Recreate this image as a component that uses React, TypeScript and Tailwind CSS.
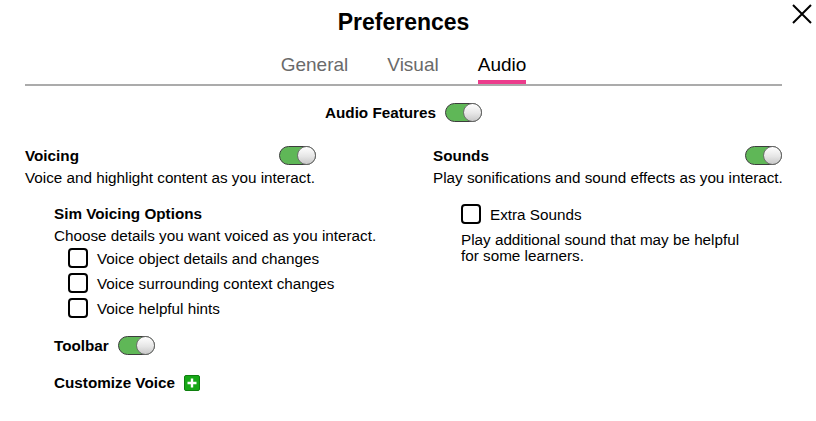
import React from 'react';

function Toggle() {
  return (
    <div className="relative w-[37px] h-[19px] shrink-0 rounded-full bg-[#5fb757] border border-[#3d3d3d]">
      <div className="absolute right-[-1px] top-[-1px] w-[19px] h-[19px] rounded-full border border-[#6e6e6e] bg-[linear-gradient(180deg,#ffffff_0%,#e6e6e6_55%,#c8c8c8_100%)]" />
    </div>
  );
}

function CheckBox() {
  return <div className="w-[20px] h-[20px] shrink-0 rounded-[4px] border-2 border-black bg-white" />;
}

function CheckRow({ label }: { label: string }) {
  return (
    <div className="flex items-center gap-[9px] h-[20px]">
      <CheckBox />
      <span>{label}</span>
    </div>
  );
}

export default function App() {
  return (
    <div
      className="relative w-[816px] h-[421px] bg-white text-black text-[15.25px] leading-[17px] whitespace-nowrap"
      style={{ fontFamily: '"Liberation Sans", Arial, sans-serif' }}
    >
      {/* close button */}
      <button className="absolute left-[792px] top-[4px] w-[20px] h-[20px]" aria-label="Close">
        <svg width="20" height="20" viewBox="0 0 20 20">
          <path d="M1 1 L19 19 M19 1 L1 19" stroke="#000" strokeWidth="2" />
        </svg>
      </button>

      <div className="ml-[25px] w-[757px] flex flex-col">
        <h1 className="pt-[9px] text-center text-[23px] leading-[26px] font-bold">Preferences</h1>

        {/* tabs */}
        <div className="mt-[19px] flex justify-center gap-[39px] text-[19px] leading-[22px]">
          <div className="flex flex-col">
            <span className="text-[#6a6a6a]">General</span>
            <div className="mt-[4px] h-[4px]" />
          </div>
          <div className="flex flex-col">
            <span className="text-[#6a6a6a]">Visual</span>
            <div className="mt-[4px] h-[4px]" />
          </div>
          <div className="flex flex-col">
            <span className="text-black">Audio</span>
            <div className="mt-[4px] h-[4px] bg-[#ec3c8c]" />
          </div>
        </div>
        <div className="h-[2px] bg-[#ababab]" />

        {/* audio features */}
        <div className="mt-[16px] flex justify-center items-center gap-[9px] h-[20px]">
          <span className="font-bold">Audio Features</span>
          <Toggle />
        </div>

        <div className="mt-[23px] flex justify-between">
          {/* voicing */}
          <div className="w-[291px] flex flex-col">
            <div className="flex justify-between items-center h-[20px]">
              <span className="font-bold">Voicing</span>
              <Toggle />
            </div>
            <p className="mt-[4px]">Voice and highlight content as you interact.</p>

            <div className="pl-[29px] flex flex-col">
              <p className="mt-[19px] font-bold">Sim Voicing Options</p>
              <p className="mt-[5px]">Choose details you want voiced as you interact.</p>
              <div className="mt-[4px] pl-[14px] flex flex-col gap-[5px]">
                <CheckRow label="Voice object details and changes" />
                <CheckRow label="Voice surrounding context changes" />
                <CheckRow label="Voice helpful hints" />
              </div>

              <div className="mt-[17px] flex items-center gap-[9px] h-[20px]">
                <span className="font-bold">Toolbar</span>
                <Toggle />
              </div>

              <div className="mt-[19px] flex items-center gap-[9px]">
                <span className="font-bold">Customize Voice</span>
                <div className="w-[16px] h-[16px] rounded-[2px] bg-[#17a817] border border-[#0f7f0f] flex items-center justify-center">
                  <svg width="10" height="10" viewBox="0 0 10 10">
                    <path d="M5 0.5 V9.5 M0.5 5 H9.5" stroke="#fff" strokeWidth="2.4" />
                  </svg>
                </div>
              </div>
            </div>
          </div>

          {/* sounds */}
          <div className="w-[349px] flex flex-col">
            <div className="flex justify-between items-center h-[20px]">
              <span className="font-bold">Sounds</span>
              <Toggle />
            </div>
            <p className="mt-[4px]">Play sonifications and sound effects as you interact.</p>

            <div className="pl-[28px] flex flex-col">
              <div className="mt-[18px]">
                <CheckRow label="Extra Sounds" />
              </div>
              <p className="mt-[8px] leading-[16px]">
                Play additional sound that may be helpful
                <br />
                for some learners.
              </p>
            </div>
          </div>
        </div>
      </div>
    </div>
  );
}
